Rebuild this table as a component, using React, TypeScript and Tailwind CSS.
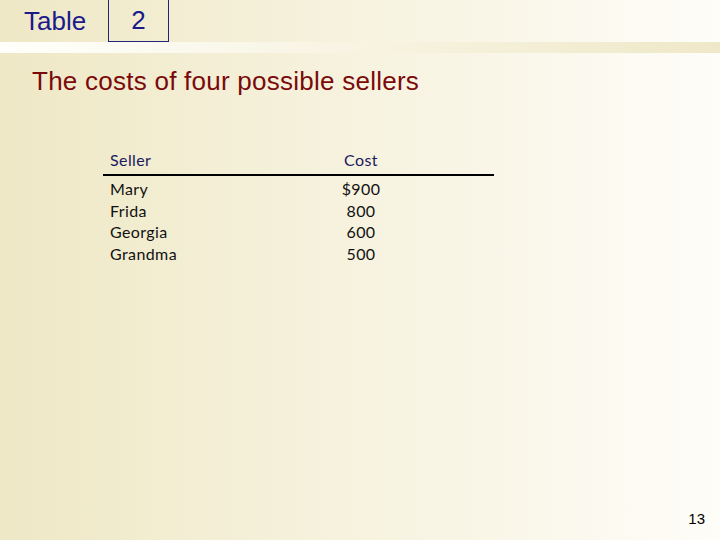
export default function App() {
  const rows = [
    ["Mary", "$900"],
    ["Frida", "800"],
    ["Georgia", "600"],
    ["Grandma", "500"],
  ];
  return (
    <div className="relative w-[720px] h-[540px] overflow-hidden bg-gradient-to-r from-[#efe8c6] to-[#fefdf8] font-['Liberation_Sans',sans-serif]">
      <div className="flex h-[42px] items-stretch">
        <div className="w-[108px] pl-[24px] pt-[6px] text-[26px] leading-[30px] text-[#1a1a8c]">Table</div>
        <div className="w-[61px] border border-t-0 border-[#23237a] flex items-center justify-center text-[26px] text-[#1a1a8c] pb-[1px]">2</div>
      </div>
      <div className="h-[11px] bg-gradient-to-r from-[#fffffb] to-[#efe8c8]"></div>
      <div className="pl-[32px] pt-[13px] text-[26px] leading-[30px] tracking-[0.25px] text-[#7a0a0a]">The costs of four possible sellers</div>
      <div className="ml-[103px] mt-[52px] w-[391px] font-['Lato',sans-serif] text-[16px] tracking-[0.4px]">
        <div className="flex border-b-2 border-black pb-[2px] text-[#1a1a5e]">
          <div className="w-[207px] pl-[7px]">Seller</div>
          <div className="w-[102px] text-center">Cost</div>
        </div>
        <div className="pt-[2px] text-[#111]">
          {rows.map(([n, c]) => (
            <div key={n} className="flex h-[21.6px] leading-[21.6px]">
              <div className="w-[207px] pl-[7px]">{n}</div>
              <div className="w-[102px] text-center">{c}</div>
            </div>
          ))}
        </div>
      </div>
      <div className="absolute right-[15px] bottom-[10px] text-[15px] text-black">13</div>
    </div>
  );
}
